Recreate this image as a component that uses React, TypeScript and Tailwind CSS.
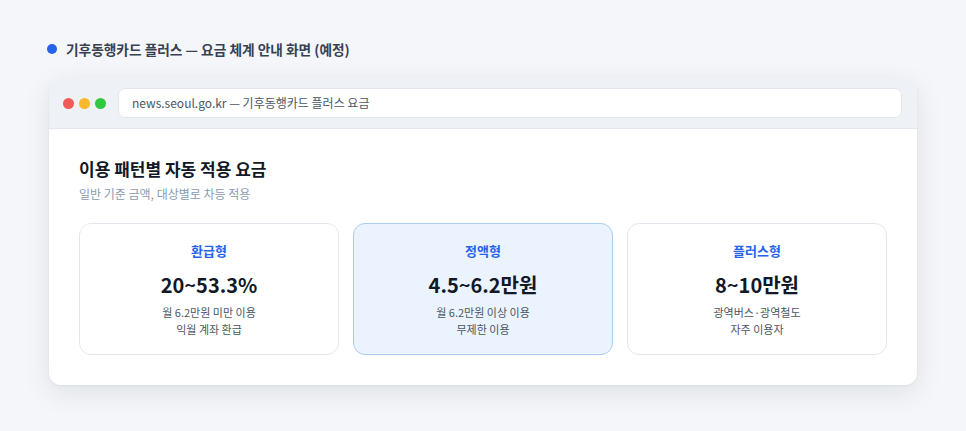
const font = { fontFamily: '"Noto Sans CJK KR", "Noto Sans", sans-serif' };

interface Plan {
  name: string;
  price: string;
  lines: string[];
  featured?: boolean;
}

const plans: Plan[] = [
  { name: '환급형', price: '20~53.3%', lines: ['월 6.2만원 미만 이용', '익월 계좌 환급'] },
  { name: '정액형', price: '4.5~6.2만원', lines: ['월 6.2만원 이상 이용', '무제한 이용'], featured: true },
  { name: '플러스형', price: '8~10만원', lines: ['광역버스·광역철도', '자주 이용자'] },
];

function PlanCard({ plan }: { plan: Plan }) {
  return (
    <div
      className={
        plan.featured
          ? 'flex h-[132px] flex-col items-center rounded-[12px] border border-[#a9cdf0] bg-[#ebf3fe] pt-[17px]'
          : 'flex h-[132px] flex-col items-center rounded-[12px] border border-[#e3e7ed] bg-white pt-[17px]'
      }
    >
      <p className="text-[13px] font-bold leading-[20px] text-[#2563eb]">{plan.name}</p>
      <p className="mt-[11px] text-[20px] font-bold leading-[26px] text-[#111827]">{plan.price}</p>
      <div className="mt-[6px] text-center text-[11px] leading-[17px] text-[#4b5563]">
        {plan.lines.map((l) => (
          <p key={l}>{l}</p>
        ))}
      </div>
    </div>
  );
}

export default function App() {
  return (
    <div className="min-h-[431px] w-[966px] bg-[#f4f6f9] pt-[40px]" style={font}>
      {/* Caption */}
      <div className="flex h-[18px] items-center pl-[47px]">
        <span className="h-[10px] w-[10px] rounded-full bg-[#2563eb]" />
        <span className="ml-[9px] text-[13.7px] font-bold text-[#374151]">
          기후동행카드 플러스 — 요금 체계 안내 화면 (예정)
        </span>
      </div>

      {/* Browser window */}
      <div className="ml-[49px] mt-[20px] w-[868px] overflow-hidden rounded-[12px] bg-white shadow-[0_8px_28px_rgba(15,23,42,0.09),0_1px_3px_rgba(15,23,42,0.05)]">
        <div className="flex h-[51px] items-center border-b border-[#e4e8ee] bg-[#eef1f5] pl-[14px] pr-[15px]">
          <div className="flex gap-[5px]">
            <span className="h-[11px] w-[11px] rounded-full bg-[#f05b57]" />
            <span className="h-[11px] w-[11px] rounded-full bg-[#fbb72d]" />
            <span className="h-[11px] w-[11px] rounded-full bg-[#2fc840]" />
          </div>
          <div className="ml-[12px] flex h-[30px] flex-1 items-center rounded-[7px] border border-[#e2e6ec] bg-white pl-[13px] text-[12px] text-[#4b5563]">
            news.seoul.go.kr — 기후동행카드 플러스 요금
          </div>
        </div>

        <div className="px-[30px] pb-[30px] pt-[28px]">
          <h2 className="text-[17px] font-bold leading-[24px] text-[#111827]">이용 패턴별 자동 적용 요금</h2>
          <p className="mt-[5px] text-[12px] leading-[16px] text-[#8a9ab0]">일반 기준 금액, 대상별로 차등 적용</p>
          <div className="mt-[21px] grid grid-cols-3 gap-[14px]">
            {plans.map((p) => (
              <PlanCard key={p.name} plan={p} />
            ))}
          </div>
        </div>
      </div>
    </div>
  );
}
